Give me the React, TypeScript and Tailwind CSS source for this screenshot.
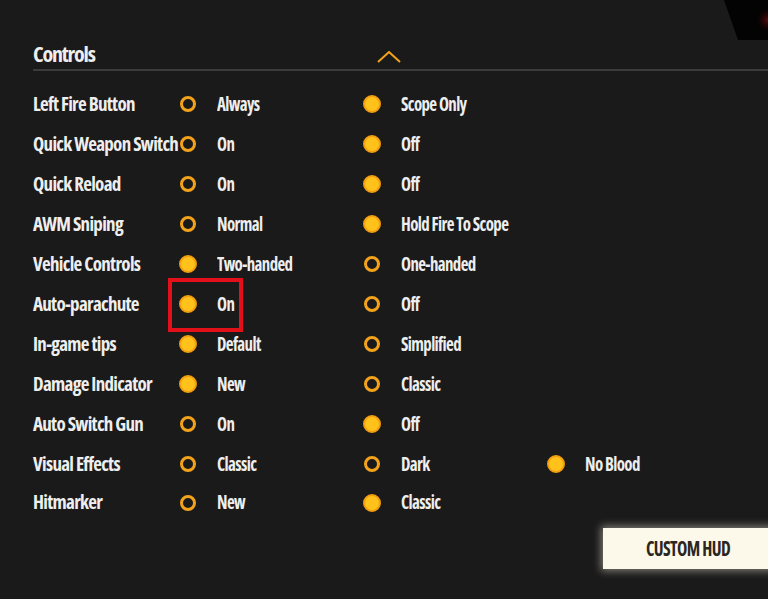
import React from 'react';

type Row = {
  label: string;
  options: { text: string; on: boolean }[];
  highlight?: boolean;
};

const rows: Row[] = [
  { label: 'Left Fire Button', options: [{ text: 'Always', on: false }, { text: 'Scope Only', on: true }] },
  { label: 'Quick Weapon Switch', options: [{ text: 'On', on: false }, { text: 'Off', on: true }] },
  { label: 'Quick Reload', options: [{ text: 'On', on: false }, { text: 'Off', on: true }] },
  { label: 'AWM Sniping', options: [{ text: 'Normal', on: false }, { text: 'Hold Fire To Scope', on: true }] },
  { label: 'Vehicle Controls', options: [{ text: 'Two-handed', on: true }, { text: 'One-handed', on: false }] },
  { label: 'Auto-parachute', options: [{ text: 'On', on: true }, { text: 'Off', on: false }], highlight: true },
  { label: 'In-game tips', options: [{ text: 'Default', on: true }, { text: 'Simplified', on: false }] },
  { label: 'Damage Indicator', options: [{ text: 'New', on: true }, { text: 'Classic', on: false }] },
  { label: 'Auto Switch Gun', options: [{ text: 'On', on: false }, { text: 'Off', on: true }] },
  {
    label: 'Visual Effects',
    options: [
      { text: 'Classic', on: false },
      { text: 'Dark', on: false },
      { text: 'No Blood', on: true },
    ],
  },
  { label: 'Hitmarker', options: [{ text: 'New', on: false }, { text: 'Classic', on: true }] },
];

function Radio({ on }: { on: boolean }) {
  return on ? (
    <span className="block w-[18px] h-[18px] -mx-px rounded-full bg-[#ffc21a] border-2 border-[#f29e10] shrink-0" />
  ) : (
    <span className="block w-[16px] h-[16px] rounded-full border-[3px] border-[#f2a31b] shrink-0" />
  );
}

function Option({ text, on, highlight }: { text: string; on: boolean; highlight?: boolean }) {
  return (
    <div className="relative flex items-center gap-[21px] w-[184px] h-[40px]">
      {highlight && (
        <span className="absolute left-[-12px] top-[-6px] w-[75px] h-[54px] border-[4px] border-[#e3101a]" />
      )}
      <Radio on={on} />
      <span className="inline-block whitespace-nowrap origin-left scale-x-[0.89]">{text}</span>
    </div>
  );
}

export default function App() {
  return (
    <div className="relative w-[768px] h-[599px] overflow-hidden bg-[#1a1a1a] text-[#eeeeee] font-bold font-['Open_Sans',sans-serif] font-stretch-condensed tracking-[-0.7px]">
      {/* corner artwork */}
      <svg className="absolute right-0 top-0" width="44" height="41" viewBox="0 0 44 41">
        <defs>
          <radialGradient id="glow" cx="44" cy="20" r="14" gradientUnits="userSpaceOnUse">
            <stop offset="0" stopColor="#5a0a0a" />
            <stop offset="1" stopColor="#000" stopOpacity="0" />
          </radialGradient>
        </defs>
        <polygon points="0,0 44,0 44,40 14,40" fill="#030303" />
        <polygon points="0,0 44,0 44,40 14,40" fill="url(#glow)" />
      </svg>

      <div className="pt-[38px] pl-[33px]">
        <div className="relative flex items-center h-[30px]">
          <span className="text-[22px] leading-none tracking-[-1.2px]">Controls</span>
          <svg className="absolute left-[344px] top-[13px]" width="24" height="12" viewBox="0 0 24 12">
            <polyline points="1,11 12,1 23,11" fill="none" stroke="#f2a31b" strokeWidth="2" />
          </svg>
        </div>
        <div className="h-[2px] mt-px bg-[#3b3b3b]" />

        <div className="pt-[13px] text-[19px] leading-none">
          {rows.map((row, i) => (
            <div key={row.label} className={`flex items-center ${i === rows.length - 1 ? 'h-[37px]' : 'h-[40px]'}`}>
              <div className="w-[147px] whitespace-nowrap">{row.label}</div>
              {row.options.map((o) => (
                <Option key={o.text} text={o.text} on={o.on} highlight={row.highlight && o.on} />
              ))}
            </div>
          ))}
        </div>
      </div>

      <div className="absolute left-[603px] top-[528px] w-[180px] h-[41px] bg-[#fcf9ea] shadow-[0_0_8px_2px_rgba(255,250,230,0.45)] flex items-center pl-[43px]">
        <span className="inline-block text-[21px] leading-none text-[#2b2621] origin-left scale-x-[0.83]">CUSTOM HUD</span>
      </div>
    </div>
  );
}
